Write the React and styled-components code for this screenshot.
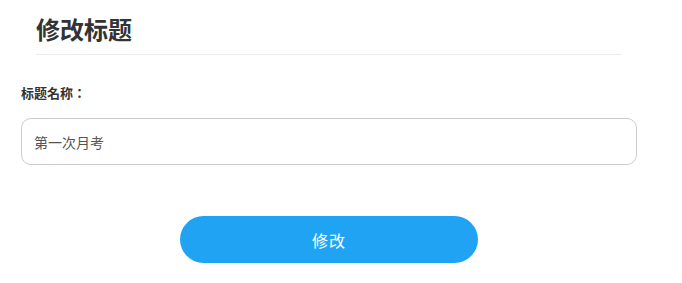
import styled, { createGlobalStyle } from "styled-components";

const GlobalStyle = createGlobalStyle`
  body {
    margin: 0;
    background: #fff;
    font-family: "Noto Sans CJK SC", "Noto Sans", sans-serif;
  }
`;

const Page = styled.div`
  width: 616px;
  padding: 0 0 0 21px;
`;

const Header = styled.div`
  margin: 0 15px;
  padding-top: 13px;
  padding-bottom: 10px;
  border-bottom: 1px solid #ececec;
`;

const Title = styled.h1`
  margin: 0;
  font-size: 24px;
  line-height: 31px;
  font-weight: 700;
  color: #333;
`;

const Form = styled.div`
  display: flex;
  flex-direction: column;
  padding-top: 29px;
`;

const Label = styled.label`
  font-family: "Noto Sans CJK TC", "Noto Sans CJK SC", sans-serif;
  font-size: 13px;
  line-height: 18px;
  font-weight: 700;
  color: #333;
`;

const Input = styled.input`
  box-sizing: border-box;
  margin-top: 16px;
  width: 616px;
  height: 47px;
  padding: 0 12px;
  border: 1px solid #cccccc;
  border-radius: 10px;
  font-family: "Noto Sans CJK SC", "Noto Sans", sans-serif;
  font-size: 14px;
  color: #555;
  outline: none;
`;

const Actions = styled.div`
  display: flex;
  justify-content: center;
  padding-top: 51px;
`;

const SubmitButton = styled.button`
  width: 298px;
  height: 47px;
  border: none;
  border-radius: 24px;
  background: #1fa3f2;
  color: #fff;
  font-family: "Noto Sans CJK SC", "Noto Sans", sans-serif;
  font-size: 16px;
  letter-spacing: 1px;
  cursor: pointer;
`;

export default function App() {
  return (
    <>
      <GlobalStyle />
      <Page>
        <Header>
          <Title>修改标题</Title>
        </Header>
        <Form>
          <Label>标题名称：</Label>
          <Input defaultValue="第一次月考" />
          <Actions>
            <SubmitButton>修改</SubmitButton>
          </Actions>
        </Form>
      </Page>
    </>
  );
}
